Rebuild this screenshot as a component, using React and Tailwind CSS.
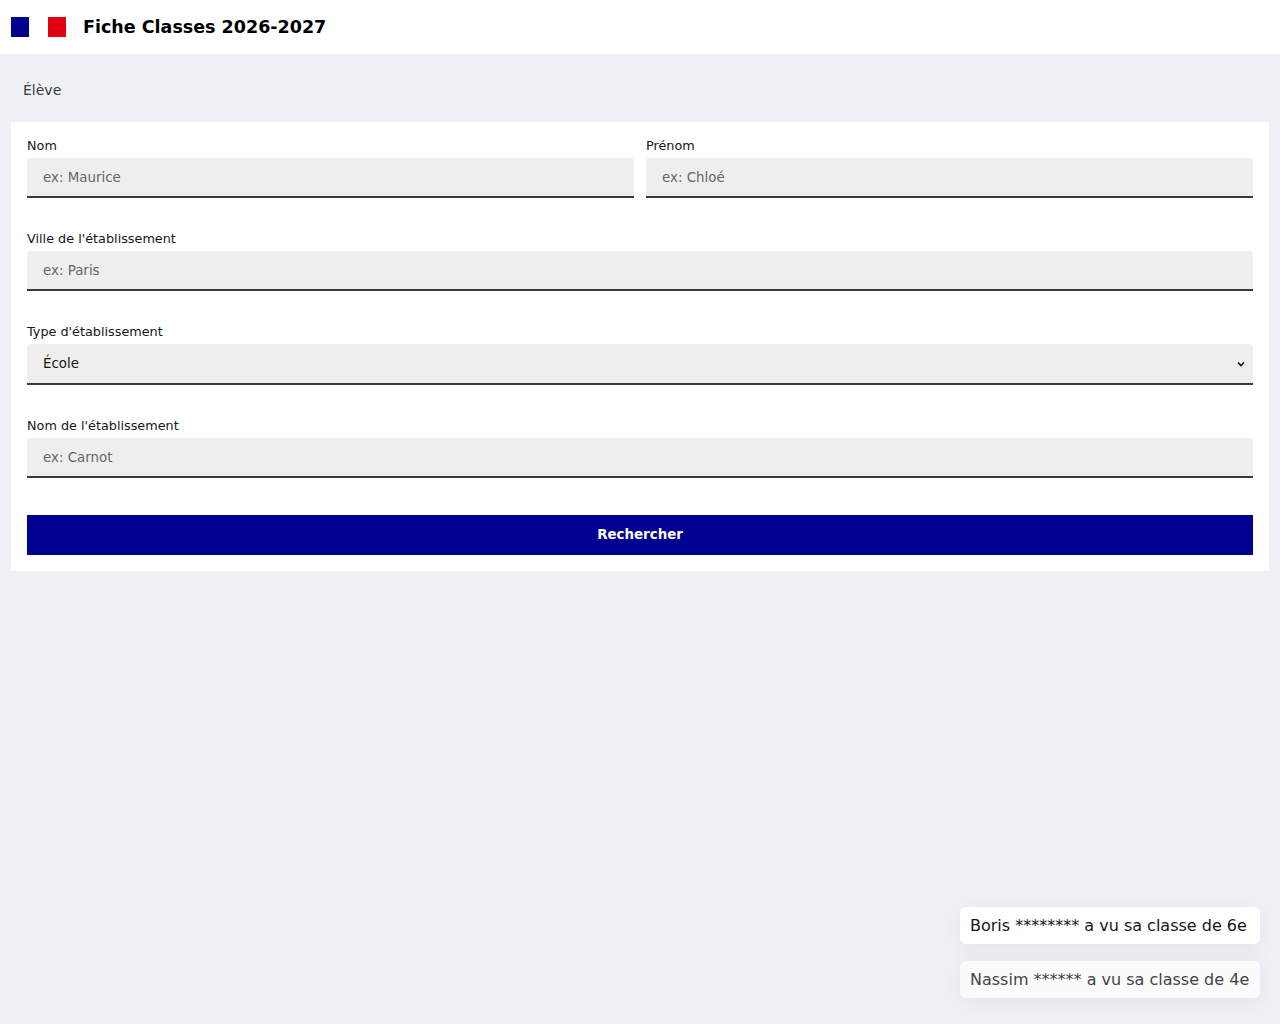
import React from 'react';

const font = { fontFamily: '"DejaVu Sans", sans-serif' };

const Field = ({ label, placeholder }) => (
  <div className="flex flex-col flex-1">
    <label className="text-[12.8px] leading-4 text-[#161616] mb-[4px]">{label}</label>
    <input
      placeholder={placeholder}
      className="h-10 w-full bg-[#eeeeee] rounded-t-[4px] border-b-2 border-[#3a3a3a] px-4 text-[13.4px] text-[#161616] placeholder:text-[#666666] outline-none"
    />
  </div>
);

const Toast = ({ children, faded }) => (
  <div
    className={
      'w-[300px] h-[37px] flex items-center px-[10px] rounded-[6px] text-[16px] whitespace-nowrap shadow-[0_4px_24px_rgba(0,0,18,0.06)] ' +
      (faded ? 'bg-white/70 text-[#444]' : 'bg-white text-[#161616]')
    }
  >
    {children}
  </div>
);

export default function App() {
  return (
    <div className="min-h-[1024px] bg-[#f0f1f6] relative" style={font}>
      {/* Header */}
      <header className="h-[54px] bg-white flex items-center px-[11px]">
        <div className="flex items-center gap-[19px]">
          <span className="block w-[18px] h-5 bg-[#000091]" />
          <span className="block w-[18px] h-5 bg-[#e1000f]" />
        </div>
        <h1 className="ml-[17px] text-[17.5px] font-bold text-[#000]">Fiche Classes 2026-2027</h1>
      </header>

      <main className="px-[11px]">
        <div className="h-[68px] pt-[4px] flex items-center px-3 text-[14px] text-[#3a3a3a]">Élève</div>

        <form className="bg-white px-4 pt-[16px] pb-4 flex flex-col" onSubmit={(e) => e.preventDefault()}>
          <div className="flex flex-col gap-[33px]">
            <div className="flex gap-3">
              <Field label="Nom" placeholder="ex: Maurice" />
              <Field label="Prénom" placeholder="ex: Chloé" />
            </div>
            <Field label="Ville de l'établissement" placeholder="ex: Paris" />
            <div className="flex flex-col">
              <label className="text-[12.8px] leading-4 text-[#161616] mb-[4px]">Type d'établissement</label>
              <div className="relative">
                <select
                  defaultValue="ecole"
                  className="appearance-none h-[41px] w-full bg-[#eeeeee] rounded-t-[4px] border-b-2 border-[#3a3a3a] px-4 pt-[2px] text-[13.4px] text-[#161616] outline-none"
                  style={font}
                >
                  <option value="ecole">École</option>
                  <option value="college">Collège</option>
                  <option value="lycee">Lycée</option>
                </select>
                <svg
                  className="absolute right-[8px] top-[17px] pointer-events-none"
                  width="8"
                  height="6"
                  viewBox="0 0 8 6"
                  fill="none"
                  stroke="#161616"
                  strokeWidth="1.6"
                >
                  <path d="M1 1.5l3 3 3-3" />
                </svg>
              </div>
            </div>
            <Field label="Nom de l'établissement" placeholder="ex: Carnot" />
          </div>
          <button
            type="submit"
            className="mt-[37px] h-10 w-full bg-[#000091] text-white text-[13.4px] font-bold"
          >
            Rechercher
          </button>
        </form>
      </main>

      {/* Recent activity toasts */}
      <div className="absolute right-5 bottom-[26px] flex flex-col gap-[17px]">
        <Toast>Boris ******** a vu sa classe de 6e</Toast>
        <Toast faded>Nassim ****** a vu sa classe de 4e</Toast>
      </div>
    </div>
  );
}
